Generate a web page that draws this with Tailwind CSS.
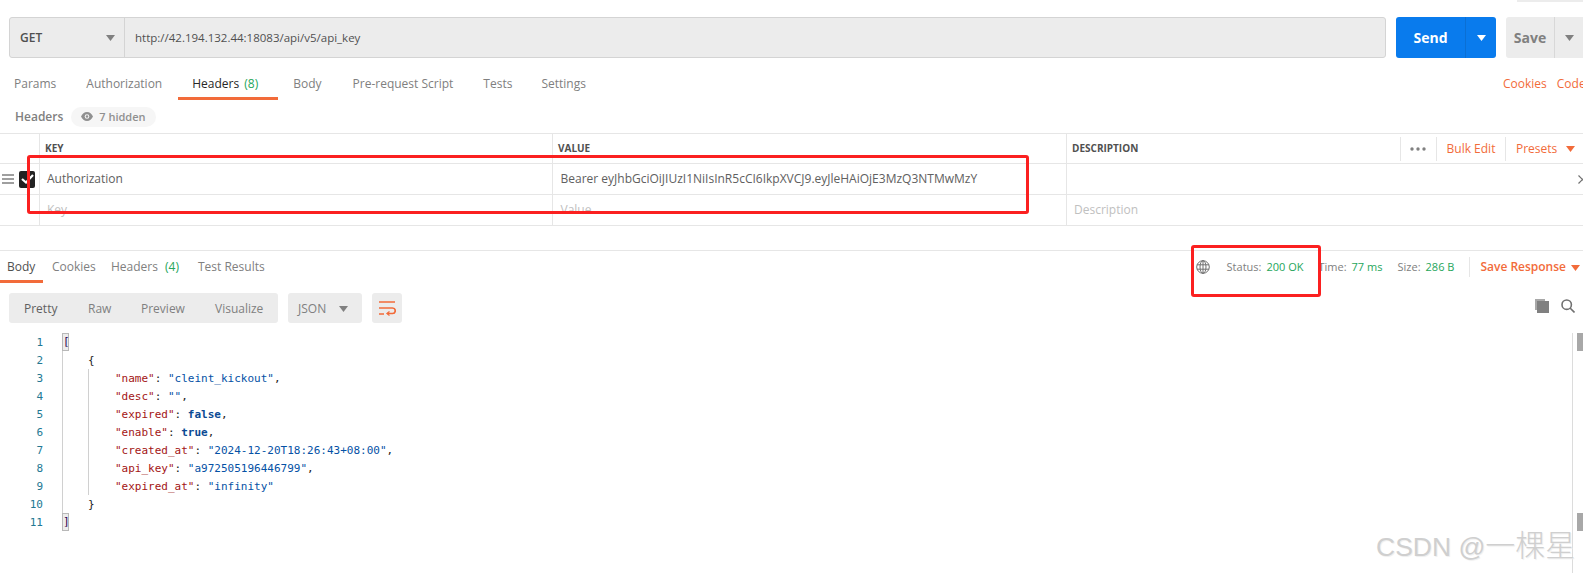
<!DOCTYPE html>
<html>
<head>
<meta charset="utf-8">
<script src="https://cdn.jsdelivr.net/npm/@tailwindcss/browser@4"></script>
</head>
<body class="bg-white">
<div class="relative w-[1583px] h-[573px] overflow-hidden bg-white font-['Open_Sans',sans-serif] text-[12px] leading-4 text-[#808080]">

  <div class="flex justify-end h-[2px]"><div class="w-[66px] bg-[#ececec]"></div></div>

  <!-- URL bar -->
  <div class="flex h-[41px] mt-[15px] pl-[9px] gap-[10px]">
    <div class="flex flex-1 bg-[#ececec] border border-[#d4d4d4] rounded-[3px]">
      <div class="flex items-center justify-between w-[115px] pl-[10px] pr-[9px] border-r border-[#d4d4d4] text-[#505050] font-semibold"><span>GET</span><svg width="9" height="6" viewBox="0 0 9 6"><path d="M0 0h9L4.500 6z" fill="#808080"/></svg></div>
      <div class="flex items-center pl-[10px] text-[#505050] text-[11.500px]">http://42.194.132.44:18083/api/v5/api_key</div>
    </div>
    <div class="flex w-[100px] bg-[#097bed] rounded-[3px] text-white text-[14px] font-bold">
      <div class="flex flex-1 items-center justify-center border-r border-[#0a6fd4]">Send</div>
      <div class="flex items-center justify-center w-[30px]"><svg width="9" height="6" viewBox="0 0 9 6"><path d="M0 0h9L4.500 6z" fill="#fff"/></svg></div>
    </div>
    <div class="flex w-[77px] bg-[#ececec] rounded-l-[3px] text-[#808080] text-[14px] font-bold">
      <div class="flex w-[49px] items-center justify-center border-r border-[#d8d8d8]">Save</div>
      <div class="flex flex-1 items-center justify-center"><svg width="9" height="6" viewBox="0 0 9 6"><path d="M0 0h9L4.500 6z" fill="#808080"/></svg></div>
    </div>
  </div>

  <!-- Request tabs -->
  <div class="flex justify-between h-[30px] mt-[12px]">
    <div class="flex">
      <div class="pt-[6px] pl-[14px] pr-[15px]">Params</div>
      <div class="pt-[6px] pl-[15px] pr-[16px]">Authorization</div>
      <div class="pt-[6px] px-[14px] text-[#282828] border-b-[3px] border-[#f26b3a] w-[100px] whitespace-nowrap">Headers <span class="ml-[2px] text-[#26a65b]">(8)</span></div>
      <div class="pt-[6px] pl-[15px] pr-[16px]">Body</div>
      <div class="pt-[6px] px-[15px]">Pre-request Script</div>
      <div class="pt-[6px] pl-[15px] pr-[14px]">Tests</div>
      <div class="pt-[6px] px-[15px]">Settings</div>
    </div>
    <div class="flex text-[#f26b3a] gap-[10px] w-[80px] pt-[6px] whitespace-nowrap overflow-hidden"><span>Cookies</span><span>Code</span></div>
  </div>

  <!-- Headers label -->
  <div class="flex items-center gap-[8px] h-[33px] pl-[15px]">
    <span class="font-semibold text-[#808080]">Headers</span>
    <span class="flex items-center gap-[6px] h-[20px] px-[10px] rounded-[10px] bg-[#f6f6f6] text-[11px] font-semibold text-[#909090]">
      <svg width="12" height="9" viewBox="0 0 12 9"><path d="M6 0C3.300 0 1.200 1.800 0 4.500 1.200 7.200 3.300 9 6 9s4.800-1.800 6-4.500C10.800 1.800 8.700 0 6 0z" fill="#909090"/><circle cx="6" cy="4.500" r="2.300" fill="#f6f6f6"/><circle cx="6" cy="4.500" r="1.200" fill="#909090"/></svg>
      7 hidden
    </span>
  </div>

  <!-- Table -->
  <div class="border-t border-[#e6e6e6]">
    <div class="grid grid-cols-[40px_513px_514px_1fr] h-[30px] border-b border-[#e6e6e6] text-[10px] font-bold text-[#505050]">
      <div class="border-r border-[#e6e6e6]"></div>
      <div class="flex items-center pl-[5px] pb-[2px] border-r border-[#e6e6e6]">KEY</div>
      <div class="flex items-center pl-[5px] pb-[2px] border-r border-[#e6e6e6]">VALUE</div>
      <div class="flex items-center justify-between pl-[5px] font-bold">
        <span class="-mt-[2px]">DESCRIPTION</span>
        <div class="flex items-center h-[24px] text-[12px] font-normal text-[#f26b3a]">
          <div class="flex items-center justify-center w-[37px] h-full border-l border-[#e6e6e6] border-r"><svg width="16" height="4" viewBox="0 0 16 4" class="-ml-[1px]"><circle cx="2" cy="2" r="1.700" fill="#808080"/><circle cx="8" cy="2" r="1.700" fill="#808080"/><circle cx="14" cy="2" r="1.700" fill="#808080"/></svg></div>
          <div class="flex items-center justify-center w-[69px] h-full border-r border-[#e6e6e6]">Bulk Edit</div>
          <div class="flex items-center w-[77px] h-full pl-[10px] gap-[9px]">Presets<svg width="9" height="6" viewBox="0 0 9 6"><path d="M0 0h9L4.500 6z" fill="#f26b3a"/></svg></div>
        </div>
      </div>
    </div>
    <div class="grid grid-cols-[40px_513px_514px_1fr] h-[31px] border-b border-[#e6e6e6] text-[#606060]">
      <div class="flex items-center pl-[2px] gap-[5px] border-r border-[#e6e6e6]">
        <svg width="12" height="10" viewBox="0 0 12 10"><path d="M0 1h12M0 5h12M0 9h12" stroke="#808080" stroke-width="1.500"/></svg>
        <span class="flex items-center justify-center w-[16px] h-[17px] rounded-[2px] bg-[#222]"><svg width="13" height="10" viewBox="0 0 13 10"><path d="M1 5l4 3.500 7-7.500" fill="none" stroke="#fff" stroke-width="2.200"/></svg></span>
      </div>
      <div class="flex items-center pl-[7px] border-r border-[#e6e6e6]">Authorization</div>
      <div class="flex items-center pl-[7.500px] border-r border-[#e6e6e6]">Bearer eyJhbGciOiJIUzI1NiIsInR5cCI6IkpXVCJ9.eyJleHAiOjE3MzQ3NTMwMzY</div>
      <div class="flex items-center justify-end"><svg width="9" height="9" viewBox="0 0 9 9" class="-mr-[4px]"><path d="M0.500 0.500l8 8M8.500 0.500l-8 8" stroke="#707070" stroke-width="1.200"/></svg></div>
    </div>
    <div class="grid grid-cols-[40px_513px_514px_1fr] h-[31px] border-b border-[#e6e6e6] text-[#c0c0c0]">
      <div class="border-r border-[#e6e6e6]"></div>
      <div class="flex items-center pl-[7px] border-r border-[#e6e6e6]">Key</div>
      <div class="flex items-center pl-[7.500px] border-r border-[#e6e6e6]">Value</div>
      <div class="flex items-center pl-[7px]">Description</div>
    </div>
  </div>

  <!-- Response header -->
  <div class="flex justify-between h-[33px] mt-[24px] border-t border-[#e6e6e6]">
    <div class="flex">
      <div class="h-full pt-[8px] pl-[7px] w-[43px] text-[#505050] border-b-[3px] border-[#f26b3a]">Body</div>
      <div class="pt-[8px] pl-[9px] w-[68px]">Cookies</div>
      <div class="pt-[8px] w-[87px] whitespace-nowrap">Headers <span class="ml-[4px] text-[#26a65b]">(4)</span></div>
      <div class="pt-[8px]">Test Results</div>
    </div>
    <div class="flex items-start pt-[8px] text-[11px] pr-[3px]">
      <svg width="14" height="14" viewBox="0 0 14 14" class="mr-[17px] mt-[1px]" fill="none" stroke="#707070" stroke-width="1"><circle cx="7" cy="7" r="6.300"/><ellipse cx="7" cy="7" rx="3" ry="6.300"/><path d="M1 4.800h12M1 9.200h12M7 .7v12.600"/></svg>
      <span class="mr-[5px]">Status:</span><span class="text-[#26a65b] w-[52px]">200 OK</span>
      <span class="mr-[5px]">Time:</span><span class="text-[#26a65b] w-[46px]">77 ms</span>
      <span class="mr-[5px]">Size:</span><span class="text-[#26a65b]">286 B</span>
      <span class="w-[1px] h-[20px] -mt-[2px] bg-[#e6e6e6] ml-[15px] mr-[10px]"></span>
      <span class="text-[12px] text-[#f26b3a] font-semibold mr-[5px]">Save Response</span>
      <svg width="9" height="6" viewBox="0 0 9 6" class="mt-[6px]"><path d="M0 0h9L4.500 6z" fill="#f26b3a"/></svg>
    </div>
  </div>

  <!-- Response toolbar -->
  <div class="flex items-center h-[30px] mt-[10px] pl-[9px] pr-[8px]">
    <div class="flex items-center w-[269px] h-full pt-[2px] rounded-[3px] bg-[#ececec]">
      <span class="pl-[15px] w-[79px] text-[#606060]">Pretty</span>
      <span class="w-[53px]">Raw</span>
      <span class="w-[74px]">Preview</span>
      <span>Visualize</span>
    </div>
    <div class="flex items-center justify-between w-[74px] h-full ml-[10px] pl-[10px] pr-[14px] pt-[2px] rounded-[3px] bg-[#ececec]">JSON<svg width="9" height="6" viewBox="0 0 9 6"><path d="M0 0h9L4.500 6z" fill="#808080"/></svg></div>
    <div class="flex items-center justify-center w-[30px] h-full ml-[10px] rounded-[3px] bg-[#ececec]">
      <svg width="17" height="15" viewBox="0 0 17 15" fill="none" stroke="#f26b3a" stroke-width="1.700"><path d="M0 1h16M0 7h13.500a2.500 2.500 0 0 1 0 5.500H8.500M0 13h5"/><path d="M10.500 10.500l-2.500 2 2.500 2" stroke-width="1.300"/></svg>
    </div>
    <div class="flex items-center gap-[12px] ml-auto -mt-[4px]">
      <svg width="14" height="14" viewBox="0 0 14 14"><rect x="0" y="0" width="10" height="11" fill="#a8a8a8"/><rect x="2" y="2" width="12" height="12" fill="#808080"/></svg>
      <svg width="14" height="14" viewBox="0 0 14 14" fill="none" stroke="#707070" stroke-width="1.600"><circle cx="5.700" cy="5.700" r="4.700"/><path d="M9 9l4.500 4.500"/></svg>
    </div>
  </div>

  <!-- Code -->
  <div class="relative mt-[10px] pt-[1px] font-['DejaVu_Sans_Mono',monospace] text-[11px] leading-[18px] text-[#222]">
    <div class="absolute left-[88px] top-[36px] w-[1px] h-[126px] bg-[#d0d0d0]"></div>
    <div class="absolute left-[62px] top-0 w-[1px] h-[198px] bg-[#d0d0d0]"></div>
    <div class="absolute left-[1572px] top-0 w-[1px] h-[240px] bg-[#dcdcdc]"></div>
    <div class="absolute left-[1577px] top-0 w-[6px] h-[18px] bg-[#a8a8a8]"></div>
    <div class="absolute left-[1577px] top-[180px] w-[6px] h-[18px] bg-[#a8a8a8]"></div>
    <div class="flex"><span class="w-[43px] text-right text-[#237893]">1</span><span class="relative ml-[19px] -mt-[1px] w-[7px] h-[18px] leading-[16px] bg-[#ececec] border border-[#b8b8b8] text-[#2a0050]">[</span></div>
    <div class="flex"><span class="w-[43px] text-right text-[#237893]">2</span><span class="ml-[45px]">{</span></div>
    <div class="flex"><span class="w-[43px] text-right text-[#237893]">3</span><span class="ml-[72px]"><span class="text-[#a31515]">"name"</span>: <span class="text-[#0451a5]">"cleint_kickout"</span>,</span></div>
    <div class="flex"><span class="w-[43px] text-right text-[#237893]">4</span><span class="ml-[72px]"><span class="text-[#a31515]">"desc"</span>: <span class="text-[#0451a5]">""</span>,</span></div>
    <div class="flex"><span class="w-[43px] text-right text-[#237893]">5</span><span class="ml-[72px]"><span class="text-[#a31515]">"expired"</span>: <span class="text-[#0b4a94] font-semibold">false</span>,</span></div>
    <div class="flex"><span class="w-[43px] text-right text-[#237893]">6</span><span class="ml-[72px]"><span class="text-[#a31515]">"enable"</span>: <span class="text-[#0b4a94] font-semibold">true</span>,</span></div>
    <div class="flex"><span class="w-[43px] text-right text-[#237893]">7</span><span class="ml-[72px]"><span class="text-[#a31515]">"created_at"</span>: <span class="text-[#0451a5]">"2024-12-20T18:26:43+08:00"</span>,</span></div>
    <div class="flex"><span class="w-[43px] text-right text-[#237893]">8</span><span class="ml-[72px]"><span class="text-[#a31515]">"api_key"</span>: <span class="text-[#0451a5]">"a972505196446799"</span>,</span></div>
    <div class="flex"><span class="w-[43px] text-right text-[#237893]">9</span><span class="ml-[72px]"><span class="text-[#a31515]">"expired_at"</span>: <span class="text-[#0451a5]">"infinity"</span></span></div>
    <div class="flex"><span class="w-[43px] text-right text-[#237893]">10</span><span class="ml-[45px]">}</span></div>
    <div class="flex"><span class="w-[43px] text-right text-[#237893]">11</span><span class="relative ml-[19px] -mt-[1px] w-[7px] h-[18px] leading-[16px] bg-[#ececec] border border-[#b8b8b8] text-[#2a0050]">]</span></div>
  </div>

  <!-- Annotations -->
  <div class="absolute left-[27px] top-[155px] w-[1002px] h-[59px] border-[3px] border-[#fb2020] rounded-[3px]"></div>
  <div class="absolute left-[1191px] top-[245px] w-[130px] h-[52px] border-[3px] border-[#fb2020] rounded-[3px]"></div>
  <div class="absolute left-[1376px] top-[529px] font-['Liberation_Sans','Noto_Sans_CJK_SC',sans-serif] text-[30px] leading-[34px] font-light text-[#cfcfcf] whitespace-nowrap [text-shadow:1px_1px_1px_#eeeeee]"><span class="text-[26.500px]">CSDN @</span>一棵星</div>
</div>
</body>
</html>
